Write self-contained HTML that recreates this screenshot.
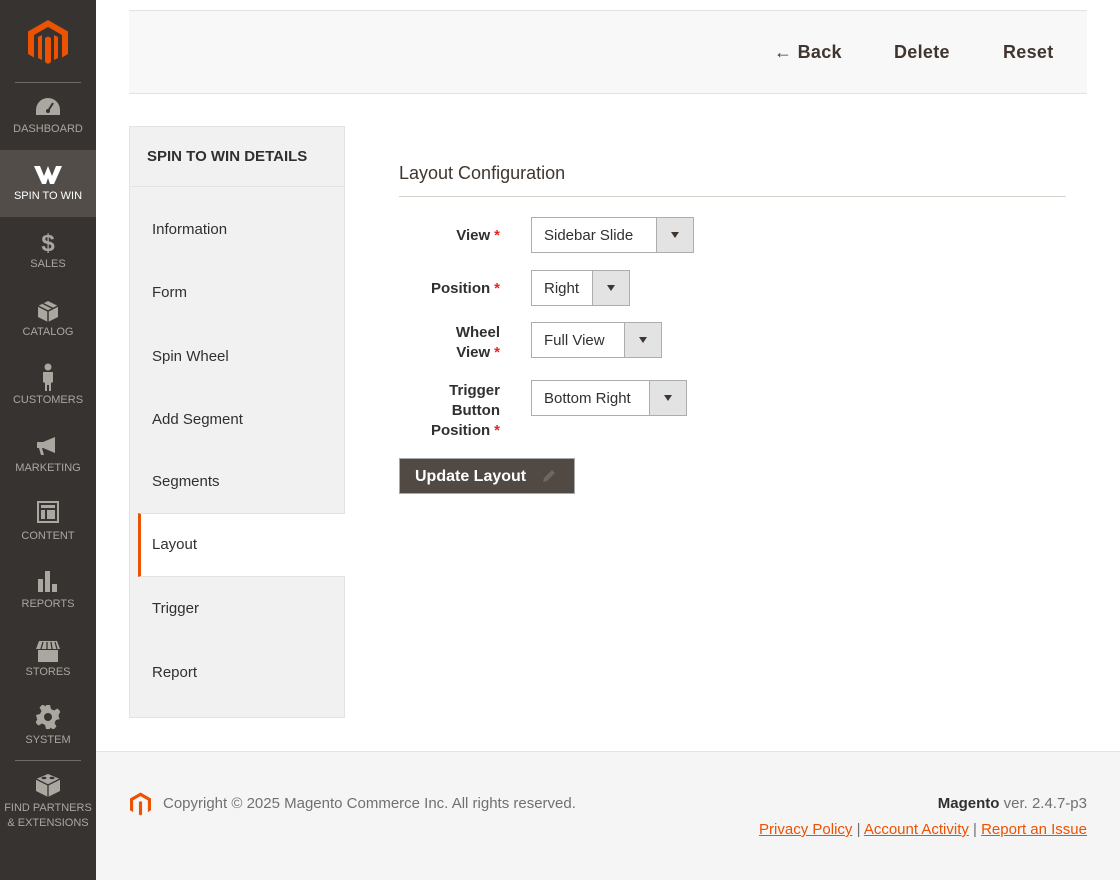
<!DOCTYPE html>
<html><head><meta charset="utf-8"><style>
*{box-sizing:border-box;margin:0;padding:0}
body{width:1120px;height:880px;overflow:hidden;background:#fff;font-family:"Liberation Sans",sans-serif;color:#303030;position:relative}
.side{position:absolute;left:0;top:0;width:96px;height:880px;background:#373330}
.side .logo{position:absolute;left:28px;top:20px}
.sep{position:absolute;left:15px;width:66px;height:1px;background:#6e6a66}
.it{position:absolute;left:0;width:96px;height:68px;text-align:center;color:#aaa6a0;font-size:11px}
.it svg{display:block;margin:0 auto}
.it span{position:absolute;left:0;right:0;top:38px}
.it.act{background:#524d49;color:#fff}
.hdr{position:absolute;left:129px;top:10px;width:958px;height:84px;background:#f8f8f8;border-top:1px solid #e3e3e3;border-bottom:1px solid #e3e3e3}
.hdr a{position:absolute;top:31px;font-size:18px;color:#41362f;font-weight:600;letter-spacing:0.3px}
.tabs{position:absolute;left:129px;top:126px;width:216px;height:592px;background:#f1f1f1;border:1px solid #e3e3e3}
.tabs .t{height:60px;border-bottom:1px solid #e3e3e3;padding:21px 0 0 17px;font-weight:bold;font-size:15px;color:#303030}
.tab{position:absolute;left:22px;font-size:15px;color:#303030}
.active{position:absolute;left:138px;top:513px;width:207px;height:64px;background:#fff;border-left:3px solid #eb5202;border-top:1px solid #e3e3e3;border-bottom:1px solid #e3e3e3}
.active span{position:absolute;left:11px;top:22px;font-size:15px}
h2{position:absolute;left:399px;top:163px;font-size:18px;font-weight:normal;color:#41362f}
.rule{position:absolute;left:399px;top:196px;width:667px;height:1px;background:#d6d3cc}
.lbl{position:absolute;right:620px;text-align:right;font-size:15px;font-weight:600;color:#303030;line-height:20px}
.lbl i{color:#e22626;font-style:normal;margin-left:4px}
.sel{position:absolute;left:531px;height:36px;border:1px solid #adadad;background:#fff;font-size:15px}
.sel span{position:absolute;left:12px;top:9px}
.sel b{position:absolute;right:0;top:0;width:37px;height:34px;background:#e3e3e3;border-left:1px solid #adadad}
.sel b:after{content:"";position:absolute;left:14px;top:14px;border-left:4.5px solid transparent;border-right:4.5px solid transparent;border-top:6px solid #41362f}
.btn{position:absolute;left:399px;top:458px;width:176px;height:36px;background:#514943;border:1px solid #a9a9a9;color:#fff;font-size:16px;font-weight:600}
.btn span{position:absolute;left:15px;top:9px}
.foot{position:absolute;left:96px;top:751px;width:1024px;height:129px;background:#f5f5f5;border-top:1px solid #e3e3e3}
.foot .c{position:absolute;left:67px;top:43px;font-size:15px;color:#707070}
.foot .v{position:absolute;right:33px;top:43px;font-size:15px;color:#707070}
.foot .l{position:absolute;right:33px;top:69px;font-size:15px;color:#707070}
.foot .l a{color:#eb5202;text-decoration:underline}
</style></head><body>
<div class="side">
<svg class="logo" width="40" height="44" viewBox="0 0 40 44"><path d="M20 0 L40 11.5 V34 L34 37.5 V15 L20 7 L6 15 V37.5 L0 34 V11.5 Z M17 18 L20 16.5 L23 18 V42 L20 44 L17 42 Z M10 17 L14 15 V40 L10 38 Z M26 15 L30 17 V38 L26 40 Z" fill="#eb5202"/></svg>
<div class="sep" style="top:82px"></div>
<div class="it" style="top:97px"><svg width="26" height="20" viewBox="0 0 26 20"><path d="M13 1A12 12 0 0 0 1 13v5h24v-5A12 12 0 0 0 13 1z" fill="#aaa6a0"/><path d="M13 14l5-8" stroke="#373330" stroke-width="2"/><circle cx="13" cy="14" r="2" fill="#373330"/></svg><span style="top:26px">DASHBOARD</span></div>
<div class="it act" style="top:150px;height:67px"><svg style="margin-top:15px" width="30" height="20" viewBox="0 0 30 20"><path d="M1 1h6l4 10 4-10 4 10 4-10h6l-8 18h-4l-2-6-2 6h-4z" fill="#fff"/></svg><span style="top:40px">SPIN TO WIN</span></div>
<div class="it" style="top:218px"><div style="font-size:24px;font-weight:bold;margin-top:14px;line-height:24px">$</div><span style="top:40px">SALES</span></div>
<div class="it" style="top:286px"><svg style="margin-top:14px" width="22" height="22" viewBox="0 0 22 22"><path d="M11 1l10 5v11l-10 5-10-5V6z" fill="#aaa6a0"/><path d="M1 6l10 5 10-5M11 11v11M6 3.5l10 5" stroke="#373330" stroke-width="1.5" fill="none"/></svg><span style="top:40px">CATALOG</span></div>
<div class="it" style="top:354px"><svg style="margin-top:9px" width="14" height="28" viewBox="0 0 14 28"><circle cx="7" cy="4" r="3.5" fill="#aaa6a0"/><path d="M2 9h10v10l-2 1v8H8v-6H6v6H4v-8l-2-1z" fill="#aaa6a0"/></svg><span style="top:40px">CUSTOMERS</span></div>
<div class="it" style="top:422px"><svg style="margin-top:14px" width="24" height="20" viewBox="0 0 24 20"><path d="M1 6h6l12-5v16L7 12H6l2 7H5l-2-7H1z" fill="#aaa6a0"/></svg><span style="top:40px">MARKETING</span></div>
<div class="it" style="top:490px"><svg style="margin-top:10px" width="24" height="24" viewBox="0 0 24 24"><path d="M1 1h22v22H1z M3 3v18h18V3z M5 5h14v3H5z M5 10h4v9H5z M11 10h8v9h-8z" fill="#aaa6a0" fill-rule="evenodd"/></svg><span style="top:40px">CONTENT</span></div>
<div class="it" style="top:558px"><svg style="margin-top:12px" width="22" height="22" viewBox="0 0 22 22"><path d="M1 9h5v13H1zM8 1h5v21H8zM15 14h5v8h-5z" fill="#aaa6a0"/></svg><span style="top:40px">REPORTS</span></div>
<div class="it" style="top:626px"><svg style="margin-top:14px" width="26" height="22" viewBox="0 0 26 22"><path d="M4 1h18l3 8H1z" fill="#aaa6a0"/><path d="M3 10h20v12H3z" fill="#aaa6a0"/><path d="M8 2l-2 7M12 2v7M16 2l1 7M20 2l2 7" stroke="#373330" stroke-width="1.3"/></svg><span style="top:40px">STORES</span></div>
<div class="it" style="top:694px"><svg style="margin-top:11px" width="24" height="24" viewBox="0 0 24 24"><path d="M10 0h4l1 4 3 1.5 3.5-2 3 3-2 3.5L23 13l-0 0 1 1-4 1-1.5 3 2 3.5-3 3-3.5-2L14 24h-4l-1-4-3-1.5-3.5 2-3-3 2-3.5L1 14 0 10l4-1 1.5-3-2-3.5 3-3 3.5 2L10 0z" fill="#aaa6a0"/><circle cx="12" cy="12" r="4" fill="#373330"/></svg><span style="top:40px">SYSTEM</span></div>
<div class="sep" style="top:760px"></div>
<div class="it" style="top:768px"><svg style="margin-top:4px" width="26" height="26" viewBox="0 0 26 26"><path d="M13 2l12 5v12l-12 6-12-6V7z" fill="#aaa6a0"/><path d="M1 7l12 6 12-6M13 13v12" stroke="#373330" stroke-width="1.3" fill="none"/><ellipse cx="9" cy="6" rx="2.5" ry="1.2" fill="#373330"/><ellipse cx="17" cy="6" rx="2.5" ry="1.2" fill="#373330"/></svg><span style="top:33px;line-height:15px">FIND PARTNERS<br>&amp; EXTENSIONS</span></div>
</div>

<div class="hdr">
<a style="left:645px">&#8592; Back</a>
<a style="left:765px">Delete</a>
<a style="left:874px">Reset</a>
</div>

<div class="tabs"><div class="t">SPIN TO WIN DETAILS</div>
<div class="tab" style="top:94px">Information</div>
<div class="tab" style="top:157px">Form</div>
<div class="tab" style="top:221px">Spin Wheel</div>
<div class="tab" style="top:284px">Add Segment</div>
<div class="tab" style="top:346px">Segments</div>
<div class="tab" style="top:473px">Trigger</div>
<div class="tab" style="top:537px">Report</div>
</div>
<div class="active"><span>Layout</span></div>

<h2>Layout Configuration</h2>
<div class="rule"></div>

<div class="lbl" style="top:226px">View<i>*</i></div>
<div class="sel" style="top:217px;width:163px"><span>Sidebar Slide</span><b></b></div>
<div class="lbl" style="top:279px">Position<i>*</i></div>
<div class="sel" style="top:270px;width:99px"><span>Right</span><b></b></div>
<div class="lbl" style="top:323px">Wheel<br>View<i>*</i></div>
<div class="sel" style="top:322px;width:131px"><span>Full View</span><b></b></div>
<div class="lbl" style="top:381px">Trigger<br>Button<br>Position<i>*</i></div>
<div class="sel" style="top:380px;width:156px"><span>Bottom Right</span><b></b></div>

<div class="btn"><span>Update Layout</span><svg style="position:absolute;left:142px;top:10px" width="14" height="14" viewBox="0 0 14 14"><path d="M1 13l1-4 8-8 3 3-8 8z" fill="#6e6660"/></svg></div>

<div class="foot">
<svg style="position:absolute;left:34px;top:40px" width="21" height="24" viewBox="0 0 40 44"><path d="M20 0 L40 11.5 V34 L34 37.5 V15 L20 7 L6 15 V37.5 L0 34 V11.5 Z M17 18 L20 16.5 L23 18 V42 L20 44 L17 42 Z" fill="#eb5202"/></svg>
<div class="c">Copyright © 2025 Magento Commerce Inc. All rights reserved.</div>
<div class="v"><b style="color:#303030">Magento</b> ver. 2.4.7-p3</div>
<div class="l"><a>Privacy Policy</a> | <a>Account Activity</a> | <a>Report an Issue</a></div>
</div>
</body></html>
